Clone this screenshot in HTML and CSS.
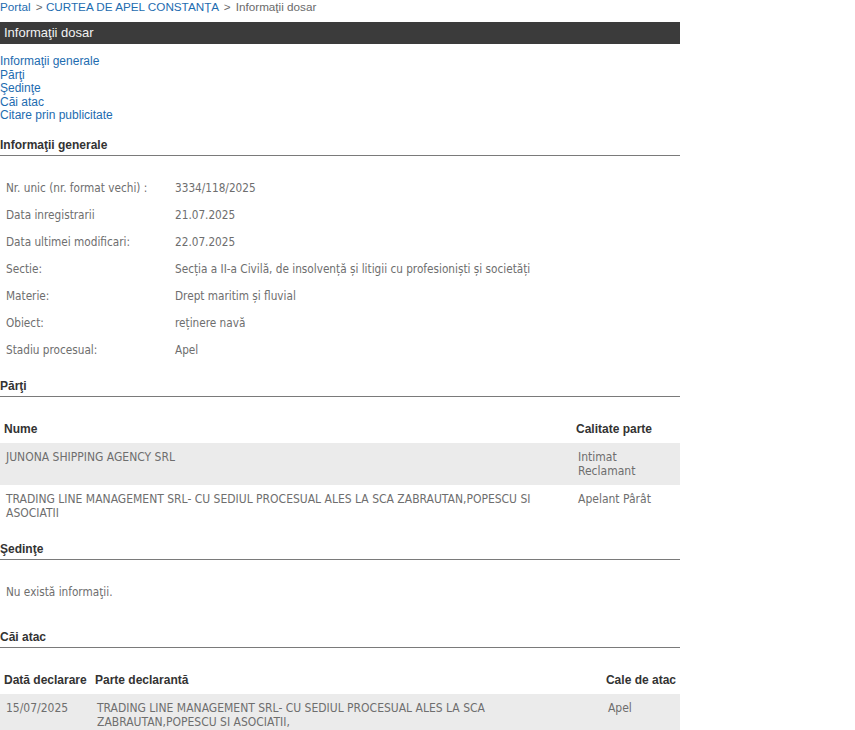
FILE: index.html
```html
<!DOCTYPE html>
<html lang="ro">
<head>
    <meta charset="UTF-8">
    <title>Informaţii dosar</title>
    <link rel="stylesheet" href="styles.css">
</head>
<body>
    <div id="page">
        <div class="breadcrumb">
            <a href="#">Portal</a>
            <span class="sep">&gt;</span> <a href="#">CURTEA DE APEL CONSTANȚA</a>
            <span class="sep">&gt;</span> <span class="current">Informaţii dosar</span>
        </div>
        <div class="title-bar">Informaţii dosar</div>

        <div class="toc">
            <a href="#generale">Informaţii generale</a>
            <a href="#parti">Părţi</a>
            <a href="#sedinte">Şedinţe</a>
            <a href="#cai">Căi atac</a>
            <a href="#citare">Citare prin publicitate</a>
        </div>

        <h2 id="generale" class="section-title">Informaţii generale</h2>
        <table class="info">
            <tr><td class="label">Nr. unic (nr. format vechi) :</td><td>3334/118/2025</td></tr>
            <tr><td class="label">Data inregistrarii</td><td>21.07.2025</td></tr>
            <tr><td class="label">Data ultimei modificari:</td><td>22.07.2025</td></tr>
            <tr><td class="label">Sectie:</td><td>Secția a II-a Civilă, de insolvență și litigii cu profesioniști și societăți</td></tr>
            <tr><td class="label">Materie:</td><td>Drept maritim și fluvial</td></tr>
            <tr><td class="label">Obiect:</td><td>reținere navă</td></tr>
            <tr><td class="label">Stadiu procesual:</td><td>Apel</td></tr>
        </table>

        <h2 id="parti" class="section-title">Părţi</h2>
        <table class="grid">
            <tr><th>Nume</th><th class="col-calitate">Calitate parte</th></tr>
            <tr class="alt"><td>JUNONA SHIPPING AGENCY SRL</td><td class="col-calitate">Intimat Reclamant</td></tr>
            <tr><td>TRADING LINE MANAGEMENT SRL- CU SEDIUL PROCESUAL ALES LA SCA ZABRAUTAN,POPESCU SI ASOCIATII</td><td class="col-calitate">Apelant Pârât</td></tr>
        </table>

        <h2 id="sedinte" class="section-title">Şedinţe</h2>
        <p class="empty">Nu există informaţii.</p>

        <h2 id="cai" class="section-title">Căi atac</h2>
        <table class="grid">
            <tr><th class="col-data">Dată declarare</th><th>Parte declarantă</th><th class="col-cale">Cale de atac</th></tr>
            <tr class="alt"><td>15/07/2025</td><td>TRADING LINE MANAGEMENT SRL- CU SEDIUL PROCESUAL ALES LA SCA ZABRAUTAN,POPESCU SI ASOCIATII,</td><td>Apel</td></tr>
        </table>
    </div>
</body>
</html>
```

FILE: styles.css
```css
body {
    margin: 0;
    background-color: #ffffff;
    font-family: "Liberation Sans", Arial, sans-serif;
    font-size: 12px;
    color: #333333;
}
#page {
    width: 680px;
}
a {
    color: #1d6cb0;
    text-decoration: none;
}
.breadcrumb {
    height: 22px;
    line-height: 14px;
    font-size: 11.7px;
}
.breadcrumb .sep,
.breadcrumb .current {
    color: #6a6a6a;
    margin-left: 2px;
}
.title-bar {
    height: 22px;
    line-height: 22px;
    padding-left: 4px;
    background-color: #3b3b3b;
    color: #f2f2f2;
    font-size: 13px;
}
.toc {
    margin-top: 11px;
    line-height: 13.5px;
}
.toc a {
    display: block;
}
.section-title {
    margin: 15px 0 0 0;
    padding-bottom: 3px;
    font-size: 12px;
    line-height: 14px;
    font-weight: bold;
    color: #333333;
    border-bottom: 1px solid #7a7a7a;
}
.info,
.grid {
    width: 100%;
    border-collapse: collapse;
    font-family: "DejaVu Sans Condensed", "DejaVu Sans", Tahoma, sans-serif;
    font-size: 11.7px;
    color: #6e6e6e;
}
.info {
    margin-top: 19px;
}
.info td {
    height: 27px;
    padding: 0 6px;
    vertical-align: middle;
}
.info td.label {
    width: 157px;
}
.grid {
    margin-top: 18px;
    font-size: 12px;
}
.grid th {
    padding: 7px 4px;
    line-height: 14px;
    text-align: left;
    font-family: "Liberation Sans", Arial, sans-serif;
    font-size: 12px;
    font-weight: bold;
    color: #333333;
    white-space: nowrap;
}
.grid td {
    padding: 7px 6px;
    line-height: 14px;
    vertical-align: top;
}
.grid tr.alt td {
    background-color: #ebebeb;
}
.grid .col-calitate {
    width: 96px;
}
.grid .col-data {
    width: 83px;
}
.grid .col-cale {
    width: 70px;
}
.empty {
    margin: 18px 0 24px 0;
    padding: 7px 6px;
    line-height: 14px;
    font-family: "DejaVu Sans Condensed", "DejaVu Sans", Tahoma, sans-serif;
    font-size: 11.7px;
    color: #6e6e6e;
}
.empty + .section-title {
    margin-top: 0;
}
```
